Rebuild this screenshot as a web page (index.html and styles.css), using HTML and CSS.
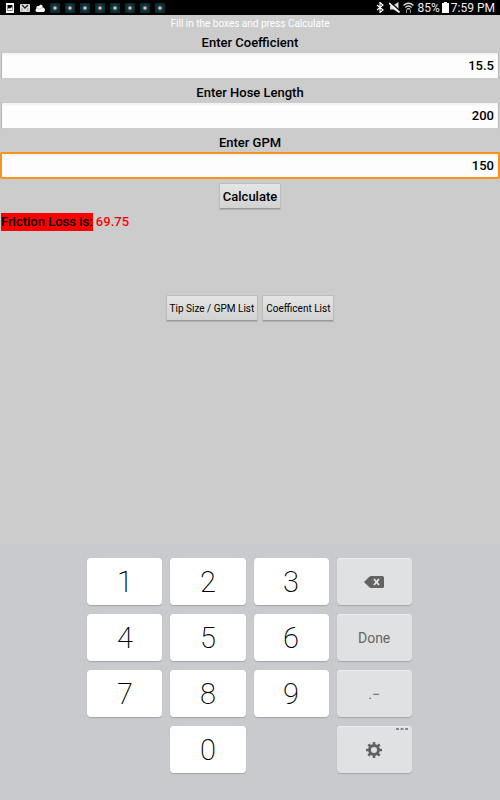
FILE: index.html
```html
<!DOCTYPE html>
<html lang="en">
<head>
    <meta charset="UTF-8">
    <meta name="viewport" content="width=device-width, initial-scale=1.0">
    <title>Friction Loss</title>
    <link rel="stylesheet" href="styles.css">
</head>
<body>

    <svg class="defs" aria-hidden="true">
        <symbol id="app" viewBox="0 0 10 10">
            <rect width="10" height="10" fill="#082b30"/>
            <circle cx="5" cy="5" r="3.4" fill="none" stroke="#164448"/>
            <circle cx="5" cy="5" r="2.3" fill="#326064"/>
            <circle cx="5" cy="5" r="1.6" fill="#f0b5b8"/>
        </symbol>
    </svg>

    <header class="status-bar">
        <div class="notifications">
            <svg width="10" height="10" viewBox="0 0 10 10"><path d="M1 0h8v10H1zM2.500 2v6h5V2z" fill="#fff" fill-rule="evenodd"/><path d="M2.800 7.500V6L4 5l1 .8L6.300 4l1 1.500v2z" fill="#fff"/></svg>
            <svg width="10" height="10" viewBox="0 0 10 10"><rect y="1" width="10" height="8" rx="1" fill="#ddd"/><path d="M2 2l3 3 3-3" fill="none" stroke="#222" stroke-width="1.300"/><path d="M2 8V5M8 8V5" fill="none" stroke="#999"/></svg>
            <svg width="10" height="10" viewBox="0 0 10 10"><path d="M2 9a2 2 0 0 1-.6-3.6C1 3.300 3 2.500 4 3.200 5 .8 8 1.600 7.700 4.500 10.500 4.500 10.500 9 8.500 9z" fill="#fff"/><path d="M1.500 5.500C3 4.500 4 5.500 4.500 6.500 5.500 5 7 5 7.700 4.500" fill="none" stroke="#999" stroke-width=".6"/></svg>
            <svg width="10" height="10"><use href="#app"/></svg>
            <svg width="10" height="10"><use href="#app"/></svg>
            <svg width="10" height="10"><use href="#app"/></svg>
            <svg width="10" height="10"><use href="#app"/></svg>
            <svg width="10" height="10"><use href="#app"/></svg>
            <svg width="10" height="10"><use href="#app"/></svg>
            <svg width="10" height="10"><use href="#app"/></svg>
            <svg width="10" height="10"><use href="#app"/></svg>
        </div>
        <div class="system">
            <svg width="8" height="11" viewBox="0 0 8 11"><path d="M1 3l6 5-3 2.500V.5L7 3 1 8" fill="none" stroke="#fff" stroke-width="1.200"/></svg>
            <svg class="mute" width="11" height="11" viewBox="0 0 11 11"><path d="M1 3.500h3L9.500 0v10.500L4.500 7.500H1z" fill="#ddd"/><path d="M1 0l10 9" stroke="#000" stroke-width="1.500"/><path d="M0 1l10.500 9.500" stroke="#fff" stroke-width="1.600"/></svg>
            <svg width="11" height="11" viewBox="0 0 11 11"><path d="M.5 3.500Q5.500-1 10.500 3.500M2.300 5.500q3.200-3 6.400 0M4 7.300q1.500-1.300 3 0" fill="none" stroke="#ddd" stroke-width="1.300"/><path d="M3.500 7.500V11M7.500 7.500V11" stroke="#999"/></svg>
            <span class="percent">85%</span>
            <svg width="7" height="11" viewBox="0 0 7 11"><path d="M2 0h3v1h2v10H0V1h2z" fill="#fff"/></svg>
            <span>7:59 PM</span>
        </div>
    </header>

    <main>
        <p class="hint">Fill in the boxes and press Calculate</p>

        <form class="calculator" onsubmit="return false">
            <label for="coefficient">Enter Coefficient</label>
            <input type="text" id="coefficient" inputmode="decimal" value="15.5">
            <label for="hose-length">Enter Hose Length</label>
            <input type="text" id="hose-length" inputmode="decimal" value="200">
            <label for="gpm">Enter GPM</label>
            <input type="text" id="gpm" class="active" inputmode="decimal" value="150">
            <button class="button calculate">Calculate</button>
        </form>

        <p class="result"><span class="result-label">Friction Loss is:</span> <output for="coefficient hose-length gpm">69.75</output></p>

        <div class="lists">
            <button class="button">Tip Size / GPM List</button>
            <button class="button">Coefficent List</button>
        </div>
    </main>

    <section class="keyboard">
        <div class="keys">
            <button class="key">1</button>
            <button class="key">2</button>
            <button class="key">3</button>
            <button class="key action" aria-label="Delete">
                <svg width="20" height="12" viewBox="0 0 20 12"><path d="M0 6l5-5q1-1 2-1h11.500Q20 0 20 1.500v9q0 1.500-1.500 1.500H7q-1 0-2-1z" fill="#626262"/><path d="M10 3l5 6M15 3l-5 6" stroke="#e6e6e6" stroke-width="1.800"/></svg>
            </button>
            <button class="key">4</button>
            <button class="key">5</button>
            <button class="key">6</button>
            <button class="key action">Done</button>
            <button class="key">7</button>
            <button class="key">8</button>
            <button class="key">9</button>
            <button class="key action">.−</button>
            <button class="key zero">0</button>
            <button class="key action settings" aria-label="Settings">
                <svg width="16" height="16" viewBox="-8 -8 16 16"><circle r="4.500" fill="none" stroke="#626262" stroke-width="3"/><path d="M0-8v3M0 5v3M-8 0h3M5 0h3M-5.700-5.700l2.200 2.200M3.500 3.500l2.200 2.200M-5.700 5.700l2.200-2.200M3.500-3.500l2.200-2.200" stroke="#626262" stroke-width="2.600"/></svg>
                <svg class="more" width="12" height="3" viewBox="0 0 12 3"><path d="M0 0h3v2H0zM4.500 0h3v2h-3zM9 0h3v2H9z" fill="#8a8a8a"/></svg>
            </button>
        </div>
    </section>

</body>
</html>
```
FILE: styles.css
```css
* {
    box-sizing: border-box;
}

body {
    display: flex;
    flex-direction: column;
    min-height: 100vh;
    margin: 0;
    background-color: #ccc;
    color: #000;
    font-family: Roboto, sans-serif;
    font-size: 13px;
}

svg {
    display: block;
    flex: none;
}

p {
    margin: 0;
}

button, input {
    font-family: inherit;
}

.defs {
    position: absolute;
    width: 0;
    height: 0;
}

.status-bar {
    display: flex;
    justify-content: space-between;
    height: 15px;
    padding: 0 5px;
    background-color: #000;
    color: #eee;
    font-size: 12px;
    line-height: 16px;
}

.notifications, .system {
    display: flex;
    align-items: center;
}

.notifications {
    gap: 5px;
}

.system {
    gap: 2px;
}

.mute {
    margin: 0 1px 0 3px;
}

.percent {
    margin-left: 2px;
}

.hint {
    color: #fff;
    font-size: 10px;
    line-height: 18px;
    text-align: center;
}

.calculator {
    display: flex;
    flex-direction: column;
    align-items: center;
    font-weight: 500;
}

.calculator label {
    height: 19px;
    line-height: 19px;
}

.calculator input {
    width: calc(100% - 2px);
    height: 27px;
    margin-bottom: 4px;
    padding: 0 4px;
    border: 1px solid #bbb;
    border-top-color: #ccc;
    border-bottom-color: #ccc;
    background-color: #fdfdfd;
    box-shadow: inset 0 2px 2px #f2f2f2;
    color: #000;
    font-size: 13px;
    font-weight: 500;
    text-align: right;
    outline: none;
}

.calculator input.active {
    width: 100%;
    border: 2px solid #f7941d;
    border-radius: 2px;
}

.button {
    height: 26px;
    padding: 0 3px;
    border: 1px solid #bdbdbd;
    border-bottom-color: #999;
    border-radius: 2px;
    background: linear-gradient(#e5e5e5, #d2d2d2);
    box-shadow: 0 1px 1px #aaa;
    color: #000;
    font-size: 10px;
}

.calculate {
    font-size: 13px;
    font-weight: 500;
}

.result {
    padding: 4px 1px;
    color: #f00;
    font-weight: 500;
    line-height: 18px;
}

.result-label {
    display: inline-block;
    background-color: #f00;
    color: #000;
}

.lists {
    display: flex;
    justify-content: center;
    gap: 4px;
    padding: 60px 0 24px;
}

.keyboard {
    margin-top: auto;
    padding: 13px 1px 27px 0;
    background-color: #c9cace;
}

.keys {
    display: grid;
    grid-template-columns: repeat(4, 1fr);
    grid-auto-rows: 47px;
    gap: 9px 8px;
    width: 65%;
    margin: 0 auto;
}

.key {
    padding: 0;
    border: none;
    border-radius: 4px;
    background-color: #fff;
    box-shadow: 0 1px 1px #a5a6a9;
    color: #000;
    font-size: 29px;
    font-weight: 200;
}

.key.action {
    display: flex;
    align-items: center;
    justify-content: center;
    background-color: #e0e1e3;
    box-shadow: inset 0 1px 0 #ececee, 0 1px 1px #a5a6a9;
    color: #666;
    font-size: 14px;
    font-weight: 400;
}

.key.zero {
    grid-column: 2;
}

.key.settings {
    position: relative;
    grid-column: 4;
}

.more {
    position: absolute;
    top: 2px;
    right: 4px;
}
```
